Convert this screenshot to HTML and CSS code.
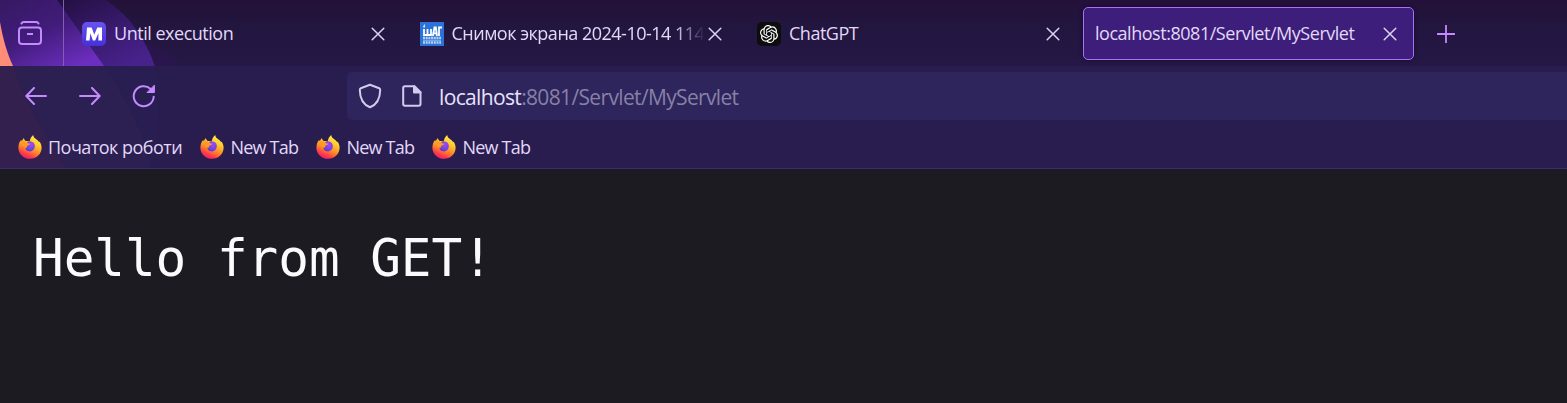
FILE: index.html
```html
<!DOCTYPE html>
<html lang="uk">
<head>
<meta charset="utf-8">
<title>localhost:8081/Servlet/MyServlet</title>
<link rel="stylesheet" href="styles.css">
</head>
<body>
<svg class="defs" width="0" height="0" aria-hidden="true">
  <defs>
    <linearGradient id="flame" x1="0.75" y1="0" x2="0.3" y2="1"><stop offset="0" stop-color="#fff44f"/><stop offset=".35" stop-color="#ffc52e"/><stop offset=".62" stop-color="#ff852a"/><stop offset=".85" stop-color="#ff364c"/><stop offset="1" stop-color="#e81a72"/></linearGradient>
    <radialGradient id="globe" cx=".6" cy=".3" r=".8"><stop offset="0" stop-color="#a04af0"/><stop offset=".6" stop-color="#7542e5"/><stop offset="1" stop-color="#4b3bb8"/></radialGradient>
    <symbol id="close" viewBox="0 0 14 14"><path d="M1.2 1.2l11.6 11.6M12.8 1.2L1.2 12.8" fill="none" stroke="#ddd3f3" stroke-width="1.5" stroke-linecap="round"/></symbol>
    <symbol id="firefox" viewBox="0 0 24 24">
      <path d="M15.200 0c.2 2 1.300 3 3 4.300 1.300 1 2.200 1.700 2.800 2.700l.7-.3c1.300 2 1.900 4 1.900 6.100 0 6.200-5.100 11-11.600 11S.4 18.900.4 12.700c0-3.300.9-6 2.800-8l.4 1.500 2.200-3.300c.4 1.500 1 2.400 2 3.200 1.400-.2 2.800 0 3.800.6C12 4.400 13 1.700 15.200 0z" fill="url(#flame)"/>
      <path d="M8 9.500c.9-2.500 3.500-3.700 5.800-2.700 2.200.8 3.200 2.600 3 4.800-.2 3-2.300 4.800-4.800 4.800-2.900 0-4.800-1.900-4.600-4.400l1.900.4z" fill="url(#globe)"/>
      <path d="M2.800 7.500c1.300-2 4-1.500 5.500 0 1.100.9 2.500 1 4 1-.3 1.600-2.400 1.700-3.300 2.700-.5.700.2 2-2.400 1.400z" fill="#ff9a25"/>
    </symbol>
  </defs>
</svg>
<header class="browser">
  <svg class="theme-art" width="200" height="168" aria-hidden="true">
    <defs>
      <linearGradient id="band" x1="0" y1="0" x2=".75" y2="1"><stop offset="0" stop-color="#351962"/><stop offset=".5" stop-color="#421c7b"/><stop offset="1" stop-color="#6c2ebf"/></linearGradient>
      <linearGradient id="disc" x1="0" y1="0" x2=".7" y2="1"><stop offset="0" stop-color="#221040"/><stop offset=".5" stop-color="#37196a"/><stop offset="1" stop-color="#47228b"/></linearGradient>
    </defs>
    <path d="M57 0h49c23 15 39 38 49 66H57z" fill="url(#disc)"/>
    <path d="M0 0h57l47 66H0z" fill="url(#band)"/>
    <path d="M0 22c3 17 7 31 13 44H0z" fill="#ff8d78"/>
    <path d="M155 66c-2-8-7-18-11-24 18 6 30 15 38 24z" fill="#2d1351" opacity=".5"/>
    <path d="M13 66h91c20 29 40 62 47 102H67C45 137 25 102 13 66z" fill="#2c1f52"/>
    <path d="M104 66h51c4 30 6 66-4 102-7-40-27-73-47-102z" fill="#291e51"/>
    <path d="M0 66h13c12 36 32 71 54 102H0z" fill="#33204e"/>
  </svg>
  <div class="tab-strip">
    <div class="view-button">
      <svg width="26" height="26" viewBox="0 0 26 26" fill="none" stroke="#c48aff" stroke-width="2" stroke-linecap="round"><path d="M4.500 3.500C5 2.500 5.700 2 6.700 2h12.600c1 0 1.700.5 2.200 1.500"/><rect x="2" y="7.500" width="22" height="16.500" rx="3"/><path d="M10 14h6" stroke-linecap="butt"/></svg>
    </div>
    <div class="tab">
      <svg class="favicon" viewBox="0 0 24 24"><defs><linearGradient id="mbg" x1="0" y1="0" x2="0" y2="1"><stop offset="0" stop-color="#6653ef"/><stop offset="1" stop-color="#4430d8"/></linearGradient></defs><rect width="24" height="24" rx="5" fill="url(#mbg)"/><path d="M4 18.500L5 5.500h4.600L12.300 12.500 15.300 5.500H20v13h-3.600v-7.200l-3.200 7.200h-2.300L8.300 11.300l-.7 7.200z" fill="#fff"/></svg>
      <span class="title title-until">Until execution</span>
      <svg class="close"><use href="#close"/></svg>
    </div>
    <div class="tab">
      <svg class="favicon" viewBox="0 0 24 24"><rect width="24" height="24" fill="#2b73d9"/><path d="M4 7v6h7V7M7.500 7v6M12.800 14l1.700-8.500h1.300L17 14M13.700 11.300h3M19 14V5.500h3" fill="none" stroke="#fff" stroke-width="1.800"/><path d="M3.200 5.500c0-1.500.5-2 1.200-3.500.5 1 .8 2 .5 3.500z" fill="#e1ecfb"/><path d="M3 16h18M3 20.500h18" stroke="#b9d2f3" stroke-width="2.500" stroke-dasharray="2 .7"/><path d="M3 18.300h18" stroke="#8db5ea"/></svg>
      <span class="title title-shot">Снимок экрана 2024-10-14 114</span>
      <svg class="close"><use href="#close"/></svg>
    </div>
    <div class="tab">
      <svg class="favicon" viewBox="0 0 24 24"><rect width="24" height="24" rx="5" fill="#0d0d0d"/><path transform="translate(3 3) scale(.75)" fill="#fff" d="M22.2819 9.8211a5.9847 5.9847 0 0 0-.5157-4.9108 6.0462 6.0462 0 0 0-6.5098-2.9A6.0651 6.0651 0 0 0 4.9807 4.1818a5.9847 5.9847 0 0 0-3.9977 2.9 6.0462 6.0462 0 0 0 .7427 7.0966 5.98 5.98 0 0 0 .511 4.9107 6.051 6.051 0 0 0 6.5146 2.9001A5.9847 5.9847 0 0 0 13.2599 24a6.0557 6.0557 0 0 0 5.7718-4.2058 5.9894 5.9894 0 0 0 3.9977-2.9001 6.0557 6.0557 0 0 0-.7475-7.073zm-9.022 12.6081a4.4755 4.4755 0 0 1-2.8764-1.0408l.1419-.0804 4.7783-2.7582a.7948.7948 0 0 0 .3927-.6813v-6.7369l2.02 1.1686a.071.071 0 0 1 .038.052v5.5826a4.504 4.504 0 0 1-4.4945 4.4944zm-9.6607-4.1254a4.4708 4.4708 0 0 1-.5346-3.0137l.142.0852 4.783 2.7582a.7712.7712 0 0 0 .7806 0l5.8428-3.3685v2.3324a.0804.0804 0 0 1-.0332.0615L9.74 19.9502a4.4992 4.4992 0 0 1-6.1408-1.6464zM2.3408 7.8956a4.485 4.485 0 0 1 2.3655-1.9728V11.6a.7664.7664 0 0 0 .3879.6765l5.8144 3.3543-2.0201 1.1685a.0757.0757 0 0 1-.071 0l-4.8303-2.7865A4.504 4.504 0 0 1 2.3408 7.872zm16.5963 3.8558L13.1038 8.364 15.1192 7.2a.0757.0757 0 0 1 .071 0l4.8303 2.7913a4.4944 4.4944 0 0 1-.6765 8.1042v-5.6772a.79.79 0 0 0-.407-.667zm2.0107-3.0231l-.142-.0852-4.7735-2.7818a.7759.7759 0 0 0-.7854 0L9.409 9.2297V6.8974a.0662.0662 0 0 1 .0284-.0615l4.8303-2.7866a4.4992 4.4992 0 0 1 6.6802 4.66zM8.3065 12.863l-2.02-1.1638a.0804.0804 0 0 1-.038-.0567V6.0742a4.4992 4.4992 0 0 1 7.3757-3.4537l-.142.0805L8.704 5.459a.7948.7948 0 0 0-.3927.6813zm1.0976-2.3654l2.602-1.4998 2.6069 1.4998v2.9994l-2.5974 1.4997-2.6067-1.4997Z"/></svg>
      <span class="title title-gpt">ChatGPT</span>
      <svg class="close"><use href="#close"/></svg>
    </div>
    <div class="tab active">
      <span class="title title-local">localhost:8081/Servlet/MyServlet</span>
      <svg class="close"><use href="#close"/></svg>
    </div>
    <svg class="new-tab" viewBox="0 0 18 18"><path d="M9 .5v17M.5 9h17" stroke="#c48aff" stroke-width="1.800" stroke-linecap="round"/></svg>
  </div>
  <div class="toolbar">
    <nav class="nav-buttons">
      <svg viewBox="0 0 22 18"><path d="M21 9H1.500M9 1L1.300 9 9 17"/></svg>
      <svg viewBox="0 0 22 18"><path d="M1 9h19.500M13 1l7.700 8-7.700 8"/></svg>
      <svg class="reload" viewBox="0 0 24 24"><path d="M21.700 12.800A10 10 0 1 1 18.600 4.900"/><path d="M22.400 1.500v7h-7z" fill="#c48aff" stroke-width="1"/></svg>
    </nav>
    <div class="url-bar">
      <svg class="shield" viewBox="0 0 24 26"><path d="M12 1.700l9.200 3.600c.8.300 1 .9 1 1.700-.1 7.200-3 14.500-10.200 17.300C4.800 21.500 1.900 14.200 1.800 7c0-.8.2-1.400 1-1.700z"/></svg>
      <svg class="page" viewBox="0 0 20 22"><path d="M3 1.200h9.500l6 6V19c0 1-.8 1.800-1.800 1.800H3c-1 0-1.800-.8-1.800-1.800V3c0-1 .8-1.800 1.800-1.800z"/><path d="M12 1.200V7.500h6.500z" fill="#d5c9ee"/></svg>
      <span class="url"><b>localhost</b>:8081/Servlet/MyServlet</span>
    </div>
  </div>
  <div class="bookmarks">
    <span class="bookmark first"><svg><use href="#firefox"/></svg><span>Початок роботи</span></span>
    <span class="bookmark"><svg><use href="#firefox"/></svg><span>New Tab</span></span>
    <span class="bookmark"><svg><use href="#firefox"/></svg><span>New Tab</span></span>
    <span class="bookmark"><svg><use href="#firefox"/></svg><span>New Tab</span></span>
  </div>
</header>
<main><h1>Hello from GET!</h1></main>
</body>
</html>
```

FILE: styles.css
```css
* { box-sizing: border-box; }
body { margin: 0; height: 403px; overflow: hidden; background: #1c1b22; font-family: "Open Sans", "Noto Sans", sans-serif; color: #e2d8f7; }
svg { display: block; flex: none; }
.defs { position: absolute; }
.browser { position: relative; height: 169px; border-bottom: 1px solid #3b2d6b; background: #291d4f; }
.theme-art { position: absolute; left: 0; top: 0; }
.tab-strip { display: flex; height: 66px; padding-top: 7px; background: linear-gradient(#241139, #22153e 35%, #251846); }
.view-button { position: relative; width: 64px; height: 66px; margin: -7px 6.5px 0 0; padding: 20px 0 0 17px; border-right: 1px solid #8060ad; }
.tab { position: relative; display: flex; align-items: center; width: 331px; height: 53px; margin-right: 6.5px; padding: 0 17px 0 11.5px; flex: none; }
.active { border: 1px solid #a970ff; border-radius: 5px; background: #3d1e7a; padding: 0 16px 0 11px; box-shadow: 0 0 4px #150b28; }
.favicon { width: 24px; height: 24px; margin-right: 8px; }
.title { flex: 1; min-width: 0; overflow: hidden; white-space: nowrap; font-size: 18px; line-height: 26px; padding-bottom: 2px; }
.title-until { letter-spacing: -.48px; }
.title-shot { letter-spacing: -.5px; margin-right: 3px; -webkit-mask-image: linear-gradient(90deg, #000 88%, transparent); mask-image: linear-gradient(90deg, #000 88%, transparent); }
.title-gpt { letter-spacing: -.5px; }
.title-local { letter-spacing: -.47px; }
.close { width: 14px; height: 14px; }
.new-tab { width: 18px; height: 18px; margin: 18px 0 0 16.5px; }
.toolbar { position: relative; display: flex; height: 60px; }
.nav-buttons { display: flex; align-items: center; width: 347px; height: 60px; padding-left: 25px; gap: 32px; }
.nav-buttons svg { width: 22px; height: 18px; fill: none; stroke: #c48aff; stroke-width: 2; stroke-linecap: round; stroke-linejoin: round; }
.nav-buttons .reload { width: 24px; height: 24px; margin-left: -1px; }
.url-bar { display: flex; align-items: center; flex: 1; height: 48px; margin-top: 6px; border-radius: 5px 0 0 5px; background: #2d255b; padding-left: 11px; }
.url-bar svg { fill: none; stroke: #d5c9ee; stroke-width: 2; stroke-linejoin: round; }
.shield { width: 24px; height: 26px; }
.page { width: 20px; height: 22px; margin-left: 20px; }
.url { margin-left: 17px; padding-top: 2px; color: #8780a8; font-size: 21px; letter-spacing: -.65px; white-space: nowrap; }
.url b { font-weight: 400; color: #e9e1fb; }
.bookmarks { position: relative; display: flex; align-items: center; height: 42px; padding-left: 18px; }
.bookmark { display: flex; align-items: center; width: 116px; font-size: 18px; letter-spacing: -.8px; white-space: nowrap; }
.bookmark span { padding-left: .5px; }
.first { width: 182px; letter-spacing: -.52px; }
.first span { padding-left: 0; }
.bookmark svg { width: 24px; height: 24px; margin-right: 6px; }
h1 { margin: 0; padding: 60px 0 0 33px; font: 400 51px/60px "DejaVu Sans Mono", monospace; letter-spacing: -.05px; color: #fbfbfe; white-space: pre; }
```
